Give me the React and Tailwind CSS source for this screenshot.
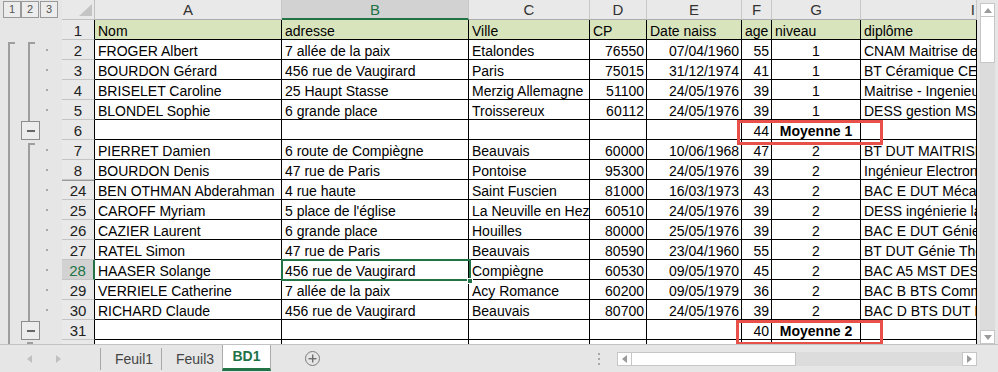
import React from "react";

const W = ["w-[187px]", "w-[187px]", "w-[121px]", "w-[57px]", "w-[95px]", "w-[30px]", "w-[89px]", "w-[116px]"];
const AL = ["pl-[3px]", "pl-[3px]", "pl-[3px]", "text-right pr-[2px]", "text-right pr-[2px]", "text-right pr-[2px]", "text-center", "pl-[3px]"];

const header = ["Nom", "adresse", "Ville", "CP", "Date naiss", "age", "niveau", "diplôme"];

const rows = [
  ["2", "FROGER Albert", "7 allée de la paix", "Etalondes", "76550", "07/04/1960", "55", "1", "CNAM Maitrise de gestion"],
  ["3", "BOURDON Gérard", "456 rue de Vaugirard", "Paris", "75015", "31/12/1974", "41", "1", "BT Céramique CESI"],
  ["4", "BRISELET Caroline", "25 Haupt Stasse", "Merzig Allemagne", "51100", "24/05/1976", "39", "1", "Maitrise - Ingenieur"],
  ["5", "BLONDEL Sophie", "6 grande place", "Troissereux", "60112", "24/05/1976", "39", "1", "DESS gestion MST"],
  ["6", "", "", "", "", "", "44", "Moyenne 1", "", true],
  ["7", "PIERRET Damien", "6 route de Compiègne", "Beauvais", "60000", "10/06/1968", "47", "2", "BT DUT MAITRISE"],
  ["8", "BOURDON Denis", "47 rue de Paris", "Pontoise", "95300", "24/05/1976", "39", "2", "Ingénieur Electronique"],
  ["24", "BEN OTHMAN Abderahman", "4 rue haute", "Saint Fuscien", "81000", "16/03/1973", "43", "2", "BAC E DUT Mécanique"],
  ["25", "CAROFF Myriam", "5 place de l'église", "La Neuville en Hez", "60510", "24/05/1976", "39", "2", "DESS ingénierie langue"],
  ["26", "CAZIER Laurent", "6 grande place", "Houilles", "80000", "25/05/1976", "39", "2", "BAC E DUT Génie"],
  ["27", "RATEL Simon", "47 rue de Paris", "Beauvais", "80590", "23/04/1960", "55", "2", "BT DUT Génie Thermique"],
  ["28", "HAASER Solange", "456 rue de Vaugirard", "Compiègne", "60530", "09/05/1970", "45", "2", "BAC A5 MST DESS"],
  ["29", "VERRIELE Catherine", "7 allée de la paix", "Acy Romance", "60200", "09/05/1979", "36", "2", "BAC B BTS Commerce"],
  ["30", "RICHARD Claude", "456 rue de Vaugirard", "Beauvais", "80700", "24/05/1976", "39", "2", "BAC D BTS DUT  Ingénieur"],
  ["31", "", "", "", "", "", "40", "Moyenne 2", "", true],
  ["32", "", "", "", "", "", "", "", ""],
];

const cellBase =
  "shrink-0 h-[20px] border-r border-b border-black overflow-hidden whitespace-nowrap pt-[3px] leading-[16px] text-[14px] text-black";

function RowHead({ n }) {
  const sel = n === "28";
  const extra = n === "24" ? " shadow-[inset_0_1px_0_#9a9a9a]" : "";
  return (
    <div
      className={
        "shrink-0 w-[33px] h-[20px] border-b border-[#c4c4c4] pt-[2px] leading-[17px] text-center text-[15px] " +
        (sel
          ? "bg-[#d2d2d2] text-[#217346] border-r-2 border-r-[#217346]"
          : "bg-[#e9e9e9] text-[#222] border-r border-r-black") +
        extra
      }
    >
      {n}
    </div>
  );
}

function DataRow({ r }) {
  const bold = r[9];
  return (
    <div className="flex">
      <RowHead n={r[0]} />
      {W.map((w, i) => (
        <div
          key={i}
          className={cellBase + " bg-white " + w + " " + AL[i] + (bold && i === 6 ? " font-bold" : "")}
        >
          {r[i + 1]}
        </div>
      ))}
    </div>
  );
}

function Tri({ dir, color = "#9b9b9b" }) {
  const pts = {
    up: "0,6 4,1 8,6",
    down: "0,1 4,6 8,1",
    left: "6,0 1,4 6,8",
    right: "1,0 6,4 1,8",
  }[dir];
  const size = dir === "up" || dir === "down" ? { w: 8, h: 7 } : { w: 7, h: 8 };
  return (
    <svg width={size.w} height={size.h} viewBox={`0 0 ${size.w} ${size.h}`}>
      <polygon points={pts} fill={color} />
    </svg>
  );
}

function Gutter() {
  const dotYs = [50, 70, 90, 110, 150, 170, 190, 210, 230, 250, 270, 290, 310];
  return (
    <div className="relative shrink-0 w-[62px] h-[344px] bg-[#e6e6e6]">
      <svg className="absolute left-0 top-0" width="62" height="344">
        <rect x="8" y="42" width="2" height="302" fill="#9e9e9e" />
        <rect x="8" y="42" width="7" height="2" fill="#9e9e9e" />
        <rect x="28" y="42" width="2" height="79" fill="#9e9e9e" />
        <rect x="28" y="42" width="7" height="2" fill="#9e9e9e" />
        <rect x="28" y="143" width="2" height="178" fill="#9e9e9e" />
        <rect x="28" y="143" width="7" height="2" fill="#9e9e9e" />
        <rect x="27" y="342" width="6" height="2" fill="#9e9e9e" />
        {dotYs.map((y) => (
          <rect key={y} x="46" y={y - 1} width="2" height="2" fill="#a8a8a8" />
        ))}
      </svg>
      {[
        ["1", "left-[3px]"],
        ["2", "left-[21px]"],
        ["3", "left-[40px]"],
      ].map(([t, l]) => (
        <div
          key={t}
          className={
            "absolute top-[1px] w-[18px] h-[17px] border border-[#9a9a9a] bg-[#ececec] text-[11px] leading-[15px] text-center text-[#555] " +
            l
          }
        >
          {t}
        </div>
      ))}
      {["top-[121px]", "top-[321px]"].map((t) => (
        <div
          key={t}
          className={
            "absolute left-[21px] w-[19px] h-[19px] border border-[#8c8c8c] bg-[#ececec] flex items-center justify-center " + t
          }
        >
          <div className="w-[8px] h-[2px] bg-[#666]" />
        </div>
      ))}
    </div>
  );
}

function Sheet() {
  const letters = ["A", "B", "C", "D", "E", "F", "G", "I"];
  return (
    <div className="relative shrink-0 w-[915px] h-[344px] overflow-hidden bg-white">
      <div className="flex">
        <div className="shrink-0 w-[33px] h-[20px] bg-[#e9e9e9] border-r border-b border-[#c0c0c0] flex items-end justify-end pr-[2px] pb-[3px]">
          <svg width="13" height="12" viewBox="0 0 13 12">
            <polygon points="13,0 13,12 0,12" fill="#c4c4c4" />
          </svg>
        </div>
        {letters.map((l, i) => {
          const sel = l === "B";
          return (
            <div
              key={l}
              className={
                "shrink-0 h-[20px] border-r border-[#c8c8c8] pt-[2px] leading-[16px] text-[15px] " +
                W[i] +
                (i === 7 ? " text-right pr-[1px]" : " text-center") +
                (sel
                  ? " bg-[#d2d2d2] text-[#217346] border-b-2 border-b-[#217346]"
                  : " bg-[#e9e9e9] text-[#333] border-b border-b-[#ababab]")
              }
            >
              {l}
            </div>
          );
        })}
      </div>
      <div className="flex">
        <RowHead n="1" />
        {W.map((w, i) => (
          <div key={i} className={cellBase + " bg-[#d8e4bc] pl-[3px] " + w}>
            {header[i]}
          </div>
        ))}
      </div>
      {rows.map((r) => (
        <DataRow key={r[0]} r={r} />
      ))}

      {/* selected cell B28 */}
      <div className="absolute left-[219px] top-[259px] w-[190px] h-[22px] border-2 border-[#217346]" />
      <div className="absolute left-[405px] top-[278px] w-[6px] h-[6px] bg-[#217346] border border-white" />

      {/* red highlight boxes */}
      <div className="absolute left-[675px] top-[120px] w-[146px] h-[25px] border-[3px] border-[#e8504a]" />
      <div className="absolute left-[674px] top-[320px] w-[147px] h-[25px] border-[3px] border-[#e8504a]" />
    </div>
  );
}

function VScroll() {
  return (
    <div className="shrink-0 w-[21px] h-[344px] bg-[#e6e6e6] flex flex-col pl-[3px] pt-[3px]">
      <div className="w-[15px] h-[14px] bg-white border border-[#c6c6c6] flex items-center justify-center">
        <Tri dir="up" />
      </div>
      <div className="w-[15px] h-[46px] bg-white border-x border-b border-[#c6c6c6]" />
      <div className="w-[15px] flex-1 bg-[#dcdcdc]" />
      <div className="w-[15px] h-[14px] bg-white border border-[#c6c6c6] flex items-center justify-center">
        <Tri dir="down" />
      </div>
    </div>
  );
}

function TabBar() {
  return (
    <div className="h-[28px] flex items-start border-t border-[#c2c2c2] bg-[#e6e6e6]">
      <div className="shrink-0 w-[100px] h-[27px] flex items-center pl-[26px] gap-[22px]">
        <Tri dir="left" color="#c0c0c0" />
        <Tri dir="right" color="#c0c0c0" />
      </div>
      <div className="shrink-0 w-[61px] h-[22px] mt-[3px] border-l border-[#a8a8a8] pl-[14px] leading-[22px] text-[14px] text-[#444]">
        Feuil1
      </div>
      <div className="shrink-0 w-[61px] h-[22px] mt-[3px] border-l border-[#a8a8a8] pl-[14px] leading-[22px] text-[14px] text-[#444]">
        Feuil3
      </div>
      <div className="shrink-0 w-[49px] h-[26px] bg-white border-x border-[#ababab] border-b-[3px] border-b-[#217346] flex items-center justify-center font-bold text-[14px] text-[#217346]">
        BD1
      </div>
      <div className="shrink-0 ml-[34px] mt-[6px] w-[15px] h-[15px] rounded-full border border-[#7b7b7b] flex items-center justify-center">
        <svg width="9" height="9" viewBox="0 0 9 9">
          <rect x="4" y="0.5" width="1.4" height="8" fill="#6f6f6f" />
          <rect x="0.5" y="4" width="8" height="1.4" fill="#6f6f6f" />
        </svg>
      </div>
      <div className="shrink-0 ml-[278px] mt-[8px] flex flex-col gap-[3px]">
        <div className="w-[2px] h-[2px] bg-[#a8a8a8]" />
        <div className="w-[2px] h-[2px] bg-[#a8a8a8]" />
        <div className="w-[2px] h-[2px] bg-[#a8a8a8]" />
      </div>
      <div className="shrink-0 ml-[17px] mt-[7px] flex h-[14px]">
        <div className="w-[15px] h-[14px] bg-white border border-[#c6c6c6] flex items-center justify-center">
          <Tri dir="left" />
        </div>
        <div className="w-[164px] h-[14px] bg-white border-y border-r border-[#c6c6c6]" />
        <div className="w-[166px] h-[14px] bg-[#dcdcdc]" />
        <div className="w-[15px] h-[14px] bg-white border border-[#c6c6c6] flex items-center justify-center">
          <Tri dir="right" />
        </div>
      </div>
    </div>
  );
}

export default function App() {
  return (
    <div className="w-[998px] h-[372px] overflow-hidden bg-[#e6e6e6] flex flex-col font-['Liberation_Sans',Arial,sans-serif]">
      <div className="flex h-[344px]">
        <Gutter />
        <Sheet />
        <VScroll />
      </div>
      <TabBar />
    </div>
  );
}
